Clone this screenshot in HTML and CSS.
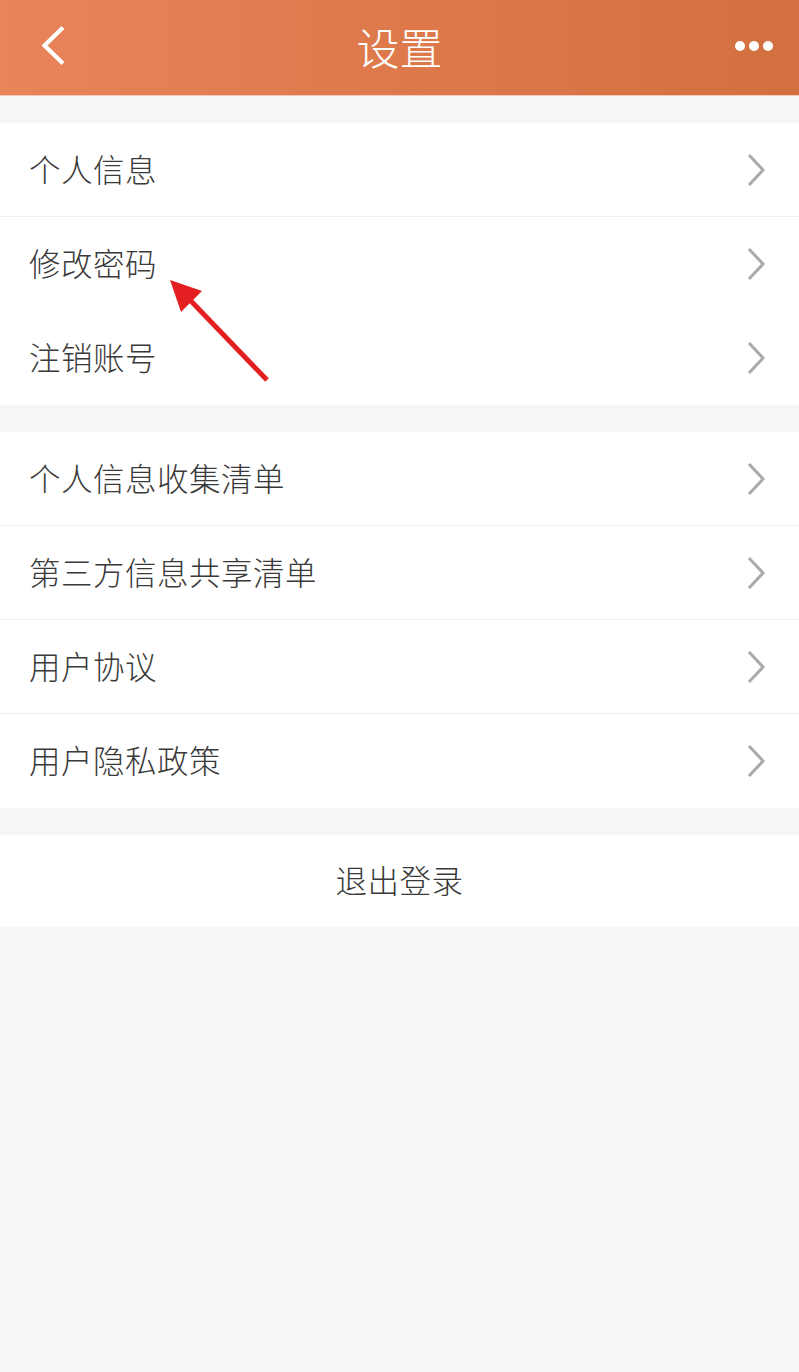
FILE: index.html
```html
<!DOCTYPE html>
<html lang="zh-CN">
<head>
<meta charset="utf-8">
<title>设置</title>
<link rel="stylesheet" href="styles.css">
</head>
<body>
<div class="page">
  <header class="topbar">
    <div class="back">
      <svg width="40" height="50" viewBox="0 0 40 50"><polyline points="27,5.5 8.5,23.5 27,41.5" fill="none" stroke="#fff" stroke-width="4.2"/></svg>
    </div>
    <h1 class="title">设置</h1>
    <div class="more"><span class="dot"></span><span class="dot"></span><span class="dot"></span></div>
  </header>

  <section class="group">
    <div class="row row-line"><span class="label">个人信息</span><svg class="chev" width="20" height="34" viewBox="0 0 20 34"><polyline points="2,2 16,17 2,32" fill="none" stroke="#aaa" stroke-width="3"/></svg></div>
    <div class="row"><span class="label">修改密码</span><svg class="chev" width="20" height="34" viewBox="0 0 20 34"><polyline points="2,2 16,17 2,32" fill="none" stroke="#aaa" stroke-width="3"/></svg></div>
    <div class="row"><span class="label">注销账号</span><svg class="chev" width="20" height="34" viewBox="0 0 20 34"><polyline points="2,2 16,17 2,32" fill="none" stroke="#aaa" stroke-width="3"/></svg></div>
  </section>

  <section class="group">
    <div class="row row-line"><span class="label">个人信息收集清单</span><svg class="chev" width="20" height="34" viewBox="0 0 20 34"><polyline points="2,2 16,17 2,32" fill="none" stroke="#aaa" stroke-width="3"/></svg></div>
    <div class="row row-line"><span class="label">第三方信息共享清单</span><svg class="chev" width="20" height="34" viewBox="0 0 20 34"><polyline points="2,2 16,17 2,32" fill="none" stroke="#aaa" stroke-width="3"/></svg></div>
    <div class="row row-line"><span class="label">用户协议</span><svg class="chev" width="20" height="34" viewBox="0 0 20 34"><polyline points="2,2 16,17 2,32" fill="none" stroke="#aaa" stroke-width="3"/></svg></div>
    <div class="row"><span class="label">用户隐私政策</span><svg class="chev" width="20" height="34" viewBox="0 0 20 34"><polyline points="2,2 16,17 2,32" fill="none" stroke="#aaa" stroke-width="3"/></svg></div>
  </section>

  <section class="group">
    <div class="logout">退出登录</div>
  </section>

  <svg class="annot" width="799" height="420" viewBox="0 0 799 420">
    <line x1="267" y1="380" x2="190" y2="300" stroke="#e41f22" stroke-width="5"/>
    <polygon points="170,280 181,312 202,291" fill="#e41f22"/>
  </svg>
</div>
</body>
</html>
```

FILE: styles.css
```css
html, body {
  margin: 0;
  padding: 0;
  background: #f6f6f6;
}
body {
  font-family: "Noto Sans CJK SC", "Noto Sans", sans-serif;
  color: #333;
}
.page {
  position: relative;
  width: 799px;
  min-height: 1372px;
  background: #f6f6f6;
}
.topbar {
  height: 95px;
  display: flex;
  align-items: center;
  justify-content: space-between;
  background: linear-gradient(90deg, #e9835a 0%, #df7a4d 45%, #d2703f 100%);
  border-bottom: 1px solid #f2cbb8;
}
.back {
  width: 96px;
  padding-left: 36px;
  box-sizing: border-box;
  display: flex;
  align-items: center;
}
.back svg {
  display: block;
  margin-top: -2px;
}
.title {
  margin: 0;
  font-size: 43px;
  font-weight: 300;
  color: #fff;
  line-height: 1;
  margin-top: -3px;
}
.more {
  width: 96px;
  display: flex;
  align-items: center;
  justify-content: flex-end;
  gap: 4px;
  padding-right: 26px;
  box-sizing: border-box;
  margin-top: -4px;
}
.dot {
  width: 10px;
  height: 10px;
  border-radius: 50%;
  background: #fff;
}
.group {
  margin-top: 27px;
  background: #fff;
}
.row {
  height: 94px;
  display: flex;
  align-items: center;
  justify-content: space-between;
  padding: 0 32px 4px 29px;
  box-sizing: border-box;
}
.row-line {
  border-bottom: 1px solid #efefef;
}
.label {
  font-size: 31.5px;
  font-weight: 300;
  color: #3a3a3a;
  letter-spacing: 0.5px;
}
.chev {
  display: block;
  margin-top: 4px;
}
.logout {
  height: 92px;
  display: flex;
  align-items: center;
  justify-content: center;
  padding-bottom: 4px;
  box-sizing: border-box;
  font-size: 31.5px;
  font-weight: 300;
  color: #3a3a3a;
  letter-spacing: 0.5px;
}
.annot {
  position: absolute;
  left: 0;
  top: 0;
  pointer-events: none;
}
```
